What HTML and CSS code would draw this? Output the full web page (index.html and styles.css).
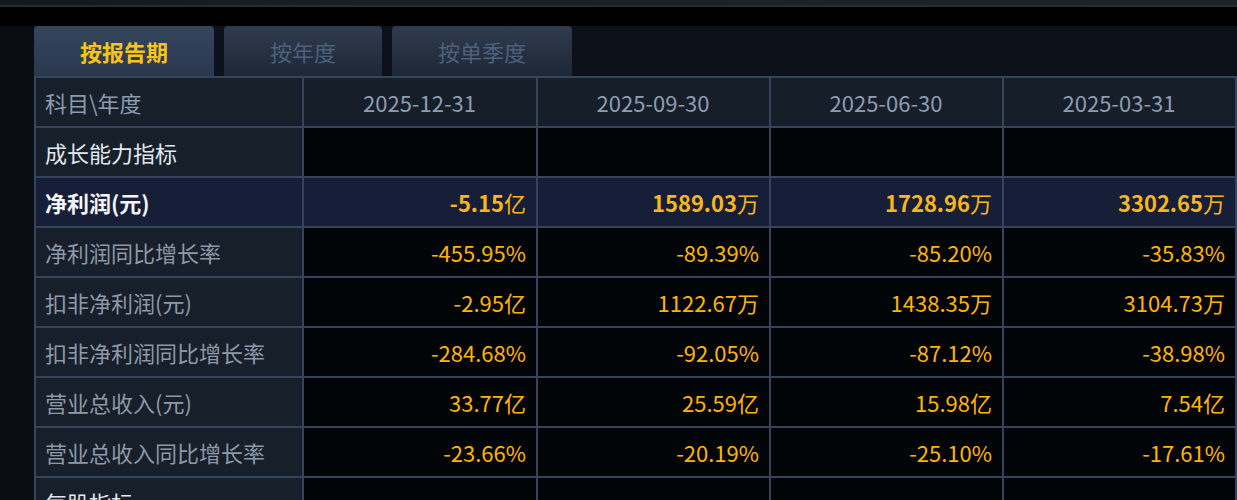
FILE: index.html
```html
<!DOCTYPE html>
<html lang="zh-CN">
<head>
<meta charset="utf-8">
<title>财务指标</title>
<link rel="stylesheet" href="styles.css">
</head>
<body>
<div class="topbar">
  <div class="topbar-frame"></div>
  <div class="topbar-line"></div>
</div>
<div class="main">
  <div class="tabs">
    <div class="tab active">按报告期</div>
    <div class="tab">按年度</div>
    <div class="tab">按单季度</div>
  </div>
  <div class="grid">
    <div class="cell head label">科目\年度</div>
    <div class="cell head">2025-12-31</div>
    <div class="cell head">2025-09-30</div>
    <div class="cell head">2025-06-30</div>
    <div class="cell head">2025-03-31</div>

    <div class="cell label group">成长能力指标</div>
    <div class="cell val"></div>
    <div class="cell val"></div>
    <div class="cell val"></div>
    <div class="cell val"></div>

    <div class="cell label hl">净利润(元)</div>
    <div class="cell val hl">-5.15<span class="unit">亿</span></div>
    <div class="cell val hl">1589.03<span class="unit">万</span></div>
    <div class="cell val hl">1728.96<span class="unit">万</span></div>
    <div class="cell val hl">3302.65<span class="unit">万</span></div>

    <div class="cell label">净利润同比增长率</div>
    <div class="cell val">-455.95%</div>
    <div class="cell val">-89.39%</div>
    <div class="cell val">-85.20%</div>
    <div class="cell val">-35.83%</div>

    <div class="cell label">扣非净利润(元)</div>
    <div class="cell val">-2.95<span class="unit">亿</span></div>
    <div class="cell val">1122.67<span class="unit">万</span></div>
    <div class="cell val">1438.35<span class="unit">万</span></div>
    <div class="cell val">3104.73<span class="unit">万</span></div>

    <div class="cell label">扣非净利润同比增长率</div>
    <div class="cell val">-284.68%</div>
    <div class="cell val">-92.05%</div>
    <div class="cell val">-87.12%</div>
    <div class="cell val">-38.98%</div>

    <div class="cell label">营业总收入(元)</div>
    <div class="cell val">33.77<span class="unit">亿</span></div>
    <div class="cell val">25.59<span class="unit">亿</span></div>
    <div class="cell val">15.98<span class="unit">亿</span></div>
    <div class="cell val">7.54<span class="unit">亿</span></div>

    <div class="cell label">营业总收入同比增长率</div>
    <div class="cell val">-23.66%</div>
    <div class="cell val">-20.19%</div>
    <div class="cell val">-25.10%</div>
    <div class="cell val">-17.61%</div>

    <div class="cell label group">每股指标</div>
    <div class="cell val"></div>
    <div class="cell val"></div>
    <div class="cell val"></div>
    <div class="cell val"></div>
  </div>
</div>
</body>
</html>
```

FILE: styles.css
```css
html, body {
  margin: 0;
  padding: 0;
  background: #0b0e15;
  height: 500px;
  overflow: hidden;
  font-family: "Noto Sans CJK SC", "Noto Sans", sans-serif;
}

.topbar {
  height: 26px;
  background: #000;
}

.topbar-frame {
  height: 5px;
  background: linear-gradient(90deg, #14171d 0%, #1b1f27 30%, #1e232b 100%);
}

.topbar-line {
  height: 2px;
  background: #262c36;
}

.main {
  padding-left: 34px;
  background: linear-gradient(90deg, #0a0d13 0, #0a0d13 34px, #0d1119 34px);
}

.tabs {
  display: flex;
  gap: 10px;
  height: 50px;
  align-items: stretch;
}

.tab {
  padding: 0 46px;
  border-radius: 4px 4px 0 0;
  background: linear-gradient(180deg, #2f3b4f 0%, #1e2736 100%);
  color: #4b617d;
  font-size: 22px;
  line-height: 50px;
  white-space: nowrap;
}

.tab.active {
  background: linear-gradient(180deg, #35455c 0%, #2a384e 100%);
  color: #f7c41a;
  font-weight: 700;
}

.grid {
  display: grid;
  grid-template-columns: 266px 232px 231px 231px 231px;
  grid-auto-rows: 48px;
  gap: 2px;
  padding: 2px;
  background: #34445b;
  width: max-content;
}

.cell {
  background: #020508;
  font-size: 22px;
  line-height: 48px;
  white-space: nowrap;
  overflow: hidden;
  color: #ffb400;
  padding: 0 10px 0 9px;
  text-align: right;
}

.cell.head {
  background: #161e2a;
  color: #8d9cae;
  text-align: center;
}

.cell.label {
  background: #171f2b;
  color: #8d99a6;
  text-align: left;
}

.cell.head.label {
  color: #8d9cae;
}

.cell.label.group {
  color: #e3e8ef;
}

.cell.hl {
  background: #161f37;
  font-weight: 700;
  color: #fbb61c;
}

.cell.label.hl {
  color: #f2f4f8;
}

.unit {
  font-weight: 400;
}
```
